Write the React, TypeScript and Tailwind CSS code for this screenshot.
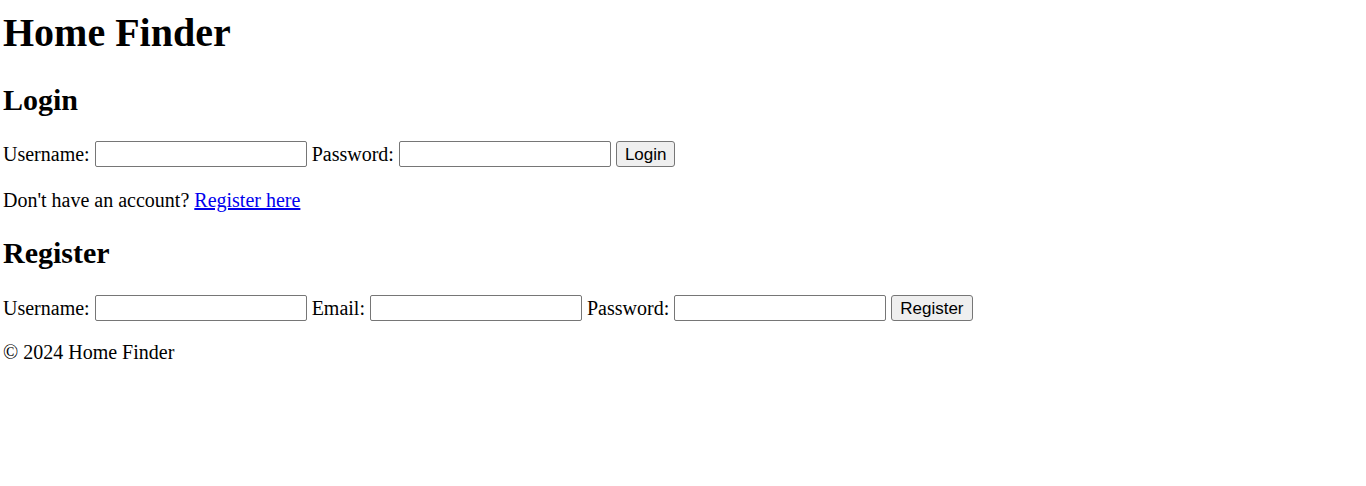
import React from 'react';

const TextInput: React.FC<{ type?: string }> = ({ type = 'text' }) => (
  <input
    type={type}
    className="w-[212px] h-[26px] border border-[#767676] rounded-[2px] bg-white px-[2px] text-[16px]"
  />
);

const Button: React.FC<{ label: string }> = ({ label }) => (
  <button className="h-[26px] px-[8px] border border-[#767676] rounded-[3px] bg-[#efefef] text-[17px] font-['Liberation_Sans',Arial,sans-serif] leading-none text-black">
    {label}
  </button>
);

const App: React.FC = () => {
  return (
    <div className="min-h-[486px] bg-white pl-[3px] pt-[11px] font-['Liberation_Serif','Times_New_Roman',serif] text-[20px] text-black">
      <h1 className="text-[40px] font-bold leading-[44px]">Home Finder</h1>

      {/* login */}
      <h2 className="mt-[28px] text-[30px] font-bold leading-[34px]">Login</h2>
      <form className="mt-[22px] flex items-center gap-[5px]" onSubmit={(e) => e.preventDefault()}>
        <label>Username:</label>
        <TextInput />
        <label>Password:</label>
        <TextInput type="password" />
        <Button label="Login" />
      </form>
      <p className="mt-[20px] leading-[23px]">
        Don't have an account?{' '}
        <a href="#register" className="text-[#0000ee] underline">Register here</a>
      </p>

      {/* register */}
      <h2 id="register" className="mt-[24px] text-[30px] font-bold leading-[34px]">Register</h2>
      <form className="mt-[23px] flex items-center gap-[5px]" onSubmit={(e) => e.preventDefault()}>
        <label>Username:</label>
        <TextInput />
        <label>Email:</label>
        <TextInput type="email" />
        <label>Password:</label>
        <TextInput type="password" />
        <Button label="Register" />
      </form>

      <footer className="mt-[18px] leading-[23px]">© 2024 Home Finder</footer>
    </div>
  );
};

export default App;
